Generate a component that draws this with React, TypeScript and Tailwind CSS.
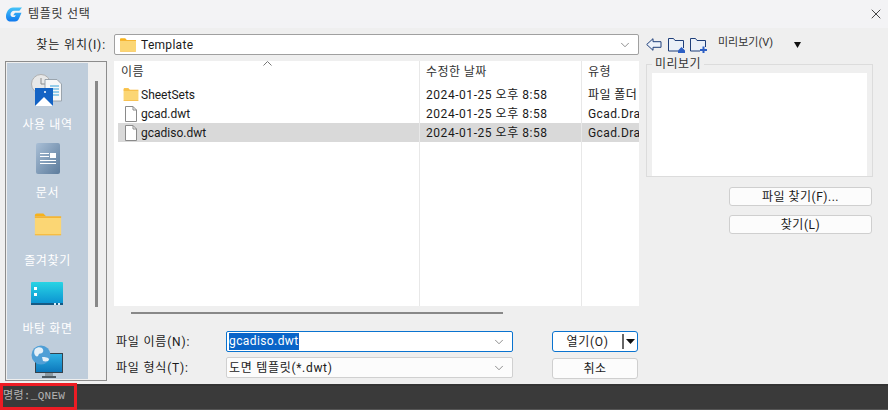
import { ChevronDown, X } from 'lucide-react'

const fontStack = "font-['Roboto','Noto_Sans_CJK_KR',sans-serif]"

function FolderIcon({ className }: { className?: string }) {
  return (
    <svg viewBox="0 0 16 14" className={className}>
      <path d="M0 1.500C0 .8.5.3 1.200.3h4l1.600 1.700H0z" fill="#f7b21a" />
      <path d="M0 2.500h15c.6 0 1 .4 1 1v9c0 .6-.4 1-1 1H1c-.6 0-1-.4-1-1z" fill="#fbd674" />
      <path d="M0 2h16v1H0zM0 13h16v.6H0z" fill="#f5b533" />
    </svg>
  )
}

function FileIcon() {
  return (
    <svg viewBox="0 0 14 16" className="w-[14px] h-[16px]">
      <path d="M1.500.5h7.500l3.500 3.500v11.500h-11z" fill="#fff" stroke="#8a8a8a" />
      <path d="M9 .5v3.500h3.500" fill="none" stroke="#8a8a8a" />
    </svg>
  )
}

function LogoIcon() {
  return (
    <svg viewBox="0 0 16 15" className="w-[16px] h-[15px]">
      <defs>
        <linearGradient id="logo" x1="0" y1="0" x2="0" y2="1">
          <stop offset="0" stopColor="#45c4f8" />
          <stop offset="1" stopColor="#0f78ee" />
        </linearGradient>
      </defs>
      <path d="M7 .5h9l-2.600 3.200H8C6 3.700 4.500 5.500 4.500 7.500c0 1.500 1 2.500 2.300 2.500h1.900l1.100-1.800H7.200L9 5.800h6.500L13 11.500c-.8 1.900-2 3-4 3H4.500C2 14.500 0 12.500 0 9.500 0 5 3 .5 7 .5z" fill="url(#logo)" />
    </svg>
  )
}

function RecentIcon() {
  return (
    <svg viewBox="0 0 32 32" className="w-[32px] h-[32px]">
      <circle cx="10" cy="10" r="9.500" fill="#e8e8e8" stroke="#b0b0b0" />
      <path d="M10 4v6h6" fill="none" stroke="#8c8c8c" />
      <path d="M14 5.500h12l4.500 4.500v17H14z" fill="#f7f7f7" stroke="#9aa4ad" />
      <path d="M19 12h9M19 15h9M19 18h9M19 21h9" stroke="#35a3dc" />
      <path d="M4 14h18v18H4z" fill="#1463c4" />
      <path d="M4 32l9-9 9 9z" fill="#fff" />
      <circle cx="14" cy="18" r="1" fill="#fff" />
    </svg>
  )
}

function DocumentIcon() {
  return (
    <div className="w-[24px] h-[31px] rounded-[2px] bg-gradient-to-br from-[#a9bfd6] to-[#5d7c9c] flex flex-col justify-center gap-[2px] px-[4px]">
      <div className="flex gap-[1px] items-start">
        <div className="flex-1 flex flex-col gap-[2px]">
          <div className="h-[1px] bg-white" />
          <div className="h-[1px] bg-white" />
        </div>
        <div className="w-[6px] h-[5px] bg-white" />
      </div>
      <div className="h-[1px] bg-white" />
      <div className="h-[1px] bg-white" />
    </div>
  )
}

function DesktopIcon() {
  return (
    <svg viewBox="0 0 32 24" className="w-[32px] h-[24px] mb-[4px]">
      <defs>
        <linearGradient id="desk" x1="0" y1="0" x2="0" y2="1">
          <stop offset="0" stopColor="#28d4e4" />
          <stop offset="1" stopColor="#0a8ed0" />
        </linearGradient>
      </defs>
      <rect x="0" y="0" width="32" height="23" rx="1" fill="url(#desk)" />
      <rect x="0" y="21" width="32" height="2" fill="#155a84" />
      <path d="M3 5h3v3H3zM3 11h3v3H3z" fill="#fff" />
      <path d="M23 21h2v2h-2zM27 21h2v2h-2z" fill="#d8eef8" />
    </svg>
  )
}

function NetworkIcon() {
  return (
    <svg viewBox="0 0 33 33" className="w-[33px] h-[33px]">
      <defs>
        <linearGradient id="screen" x1="0" y1="0" x2="0" y2="1">
          <stop offset="0" stopColor="#2fb2e4" />
          <stop offset="1" stopColor="#0c76bb" />
        </linearGradient>
      </defs>
      <rect x="4.500" y="8.500" width="27" height="19" fill="url(#screen)" stroke="#34424c" />
      <rect x="14" y="28" width="8" height="3" fill="#8d9aa3" />
      <rect x="11" y="31" width="14" height="2" fill="#4e5a63" />
      <circle cx="10" cy="10" r="9.500" fill="#4f9fd6" />
      <path d="M4 4c3-2.500 7-2 8 .5s-1 4-3 4-1 3-3 3-4-4-2-7.500zM11 12c3 0 7 .5 7 2.500s-4 2.500-6 1.500z" fill="#e4f0f8" />
    </svg>
  )
}

function SidebarItem({ icon, label }: { icon: React.ReactNode; label: string }) {
  return (
    <div className="h-[68px] shrink-0 flex flex-col items-center">
      <div className="h-[40px] flex items-end justify-center">{icon}</div>
      <span className="mt-[11px] text-[12px] leading-[16px] tracking-[0.6px] text-white">{label}</span>
    </div>
  )
}

function FileRow({ icon, name, kind, active }: { icon: React.ReactNode; name: string; kind: string; active?: boolean }) {
  return (
    <div className={`h-[19px] flex items-center overflow-hidden text-[12px] text-[#1a1a1a] ${active ? 'bg-[#d9d9d9]' : ''}`}>
      <div className="w-[23px] shrink-0 flex justify-center pl-[3px]">{icon}</div>
      <span className="w-[285px] shrink-0">{name}</span>
      <span className="w-[162px] shrink-0 tracking-[0.55px]">2024-01-25 오후 8:58</span>
      <span className="shrink-0 whitespace-nowrap tracking-[0.4px]">{kind}</span>
    </div>
  )
}

function Field({ label, value, focused }: { label: string; value: React.ReactNode; focused?: boolean }) {
  return (
    <div className="flex items-center h-[21px]">
      <span className="w-[110px] text-[12px] tracking-[0.8px] text-[#1a1a1a]">{label}</span>
      <div className={`w-[287px] h-full rounded-[2px] flex items-center justify-between pl-[2px] pr-[6px] text-[12px] tracking-[0.4px] border ${focused ? 'bg-white border-[#0a73cf]' : 'bg-[#fcfcfc] border-[#d0d0d0]'}`}>
        {value}
        <ChevronDown className="w-[14px] h-[14px] text-[#666]" strokeWidth={1.25} />
      </div>
    </div>
  )
}

function SideButton({ children }: { children: React.ReactNode }) {
  return (
    <button className="w-[143px] h-[19px] rounded-[3px] bg-[#fcfcfc] border border-[#cfcfcf] text-[12px] tracking-[0.5px] leading-none text-[#1a1a1a]">
      {children}
    </button>
  )
}

export default function App() {
  return (
    <div className={`w-[888px] h-[410px] overflow-hidden flex flex-col bg-[#efefef] ${fontStack}`}>
      {/* Title bar */}
      <div className="h-[28px] shrink-0 bg-[#f3f3f5] flex items-center pl-[6px] pr-[4px]">
        <LogoIcon />
        <span className="ml-[6px] text-[12px] tracking-[0.7px] text-[#333]">템플릿 선택</span>
        <X className="ml-auto w-[16px] h-[16px] text-[#222]" strokeWidth={1.25} />
      </div>

      <div className="flex-1 flex min-h-0">
        {/* Left side of the dialog */}
        <div className="w-[639px] shrink-0 pt-[6px] flex flex-col">
          <div className="flex items-center h-[21px]">
            <span className="w-[106px] text-right text-[12px] tracking-[0.9px] text-[#1a1a1a]">찾는 위치(I):</span>
            <div className="ml-[8px] flex-1 h-full rounded-[2px] bg-white border border-[#a0a0a0] flex items-center pl-[5px] pr-[6px]">
              <FolderIcon className="w-[16px] h-[14px]" />
              <span className="ml-[5px] text-[12px] tracking-[0.3px] text-[#1a1a1a]">Template</span>
              <ChevronDown className="ml-auto w-[14px] h-[14px] text-[#666]" strokeWidth={1.25} />
            </div>
          </div>

          <div className="mt-[6px] flex">
            {/* Places bar */}
            <div className="ml-[5px] w-[102px] shrink-0 h-[320px] border border-[#8c8c8c] bg-[#efefef] p-[1px] flex">
              <div className="w-[81px] bg-[#bfcddb] pt-[3px] flex flex-col items-center overflow-hidden">
                <SidebarItem icon={<RecentIcon />} label="사용 내역" />
                <SidebarItem icon={<DocumentIcon />} label="문서" />
                <SidebarItem icon={<FolderIcon className="w-[28px] h-[23px] mb-[6px]" />} label="즐겨찾기" />
                <SidebarItem icon={<DesktopIcon />} label="바탕 화면" />
                <div className="h-[40px] shrink-0 flex items-end"><NetworkIcon /></div>
              </div>
              <div className="flex-1 flex justify-center pt-[18px]">
                <div className="w-[3px] h-[226px] bg-[#888]" />
              </div>
            </div>

            <div className="ml-[7px] flex-1 min-w-0 flex flex-col">
              {/* File list */}
              <div className="relative h-[245px] bg-white overflow-hidden">
                <div className="absolute top-0 bottom-0 left-[305px] w-px bg-[#e8e8e8]" />
                <div className="absolute top-0 bottom-0 left-[467px] w-px bg-[#e8e8e8]" />
                <svg viewBox="0 0 9 5" className="absolute left-[149px] top-[0px] w-[9px] h-[5px]">
                  <path d="M.5 4.500 4.500.5l4 4" fill="none" stroke="#777" />
                </svg>
                <div className="h-[22px] flex items-center text-[12px] tracking-[0.4px] text-[#333] pl-[7px]">
                  <span className="w-[305px]">이름</span>
                  <span className="w-[162px]">수정한 날짜</span>
                  <span>유형</span>
                </div>
                <div className="mt-[2px] pl-[4px] flex flex-col">
                  <FileRow icon={<FolderIcon className="w-[16px] h-[13px]" />} name="SheetSets" kind="파일 폴더" />
                  <FileRow icon={<FileIcon />} name="gcad.dwt" kind="Gcad.Drawing" />
                  <FileRow icon={<FileIcon />} name="gcadiso.dwt" kind="Gcad.Drawing" active />
                </div>
              </div>

              <div className="mt-[6px] ml-[17px] w-[372px] h-[2px] bg-[#888]" />

              {/* File name and type */}
              <div className="mt-[17px] flex pl-[2px]">
                <div className="flex flex-col gap-[5px]">
                  <Field
                    label="파일 이름(N):"
                    value={<span className="bg-[#0a64c8] text-white leading-[17px]">gcadiso.dwt</span>}
                    focused
                  />
                  <Field label="파일 형식(T):" value={<span className="tracking-[0.7px] text-[#1a1a1a]">도면 템플릿(*.dwt)</span>} />
                </div>
                <div className="ml-[39px] w-[86px] flex flex-col gap-[6px]">
                  <button className="h-[21px] rounded-[3px] bg-white border border-[#0a73cf] flex items-center text-[12px] tracking-[0.7px] text-[#1a1a1a]">
                    <span className="flex-1 text-center">열기(O)</span>
                    <span className="w-[2px] h-[15px] bg-[#666]" />
                    <span className="w-[13px] flex justify-center">
                      <svg viewBox="0 0 9 5" className="w-[9px] h-[5px]"><path d="M0 0h9L4.500 5z" fill="#111" /></svg>
                    </span>
                  </button>
                  <button className="h-[21px] rounded-[3px] bg-[#fcfcfc] border border-[#cfcfcf] text-[12px] tracking-[0.5px] text-[#1a1a1a]">취소</button>
                </div>
              </div>
            </div>
          </div>
        </div>

        {/* Preview side */}
        <div className="flex-1 pl-[7px] pr-[15px] pt-[6px] flex flex-col">
          <div className="h-[21px] flex items-center">
            <svg viewBox="0 0 16 13" className="w-[16px] h-[13px]">
              <path d="M.7 6.500 7 .7v3h8v5.600H7v3z" fill="#eef3fb" stroke="#1f3f7a" />
            </svg>
            <svg viewBox="0 0 17 16" className="ml-[6px] w-[17px] h-[16px]">
              <path d="M.5 14V1.500h5l1.500 2h8.500V11L10 14z" fill="#eaf0f8" />
              <path d="M.5 14V1.500h5l1.500 2h8.500V11" fill="none" stroke="#1f3f7a" />
              <path d="M.5 14H10" stroke="#1f3f7a" />
              <path d="M10 13.500h7V16h-7zM13.500 10l3.500 3.500h-7z" fill="#2d5fc4" />
            </svg>
            <svg viewBox="0 0 17 16" className="ml-[5px] w-[17px] h-[16px]">
              <path d="M.5 14V1.500h5l1.500 2h8.500V10L10 14z" fill="#eaf0f8" />
              <path d="M.5 14V1.500h5l1.500 2h8.500V10" fill="none" stroke="#1f3f7a" />
              <path d="M.5 14H10" stroke="#1f3f7a" />
              <path d="M12.500 9.500h2v2.500h2.500v2h-2.500v2h-2v-2H10v-2h2.500z" fill="#2d5fc4" />
            </svg>
            <span className="ml-[11px] -mt-[3px] text-[11px] text-[#333] whitespace-nowrap">미리보기(V)</span>
            <svg viewBox="0 0 7 7" className="ml-[21px] w-[7px] h-[7px]"><path d="M0 1h7L3.500 7z" fill="#111" /></svg>
          </div>

          {/* Preview group */}
          <div className="relative mt-[9px] w-[227px] h-[113px] border border-[#dcdcdc] px-[5px] pt-[8px]">
            <span className="absolute left-[5px] -top-[8px] bg-[#efefef] px-[3px] text-[12px] leading-[14px] tracking-[0.5px] text-[#333]">미리보기</span>
            <div className="h-full bg-white" />
          </div>

          <div className="mt-[10px] flex flex-col items-end gap-[9px] pr-[1px]">
            <SideButton>파일 찾기(F)...</SideButton>
            <SideButton>찾기(L)</SideButton>
          </div>
        </div>
      </div>

      {/* Command line */}
      <div className="h-[26px] shrink-0 bg-[#3a3a3a] border-t-2 border-[#333] border-b border-b-[#555] flex items-start">
        <div className="w-[77px] h-[27px] -mt-[3px] border-[3px] border-[#ed1c24] flex items-center">
          <span className="font-['Liberation_Mono','Noto_Sans_CJK_KR',monospace] text-[11px] tracking-[0.3px] text-[#b4b4b4] whitespace-nowrap">명령:_QNEW</span>
        </div>
      </div>
    </div>
  )
}
